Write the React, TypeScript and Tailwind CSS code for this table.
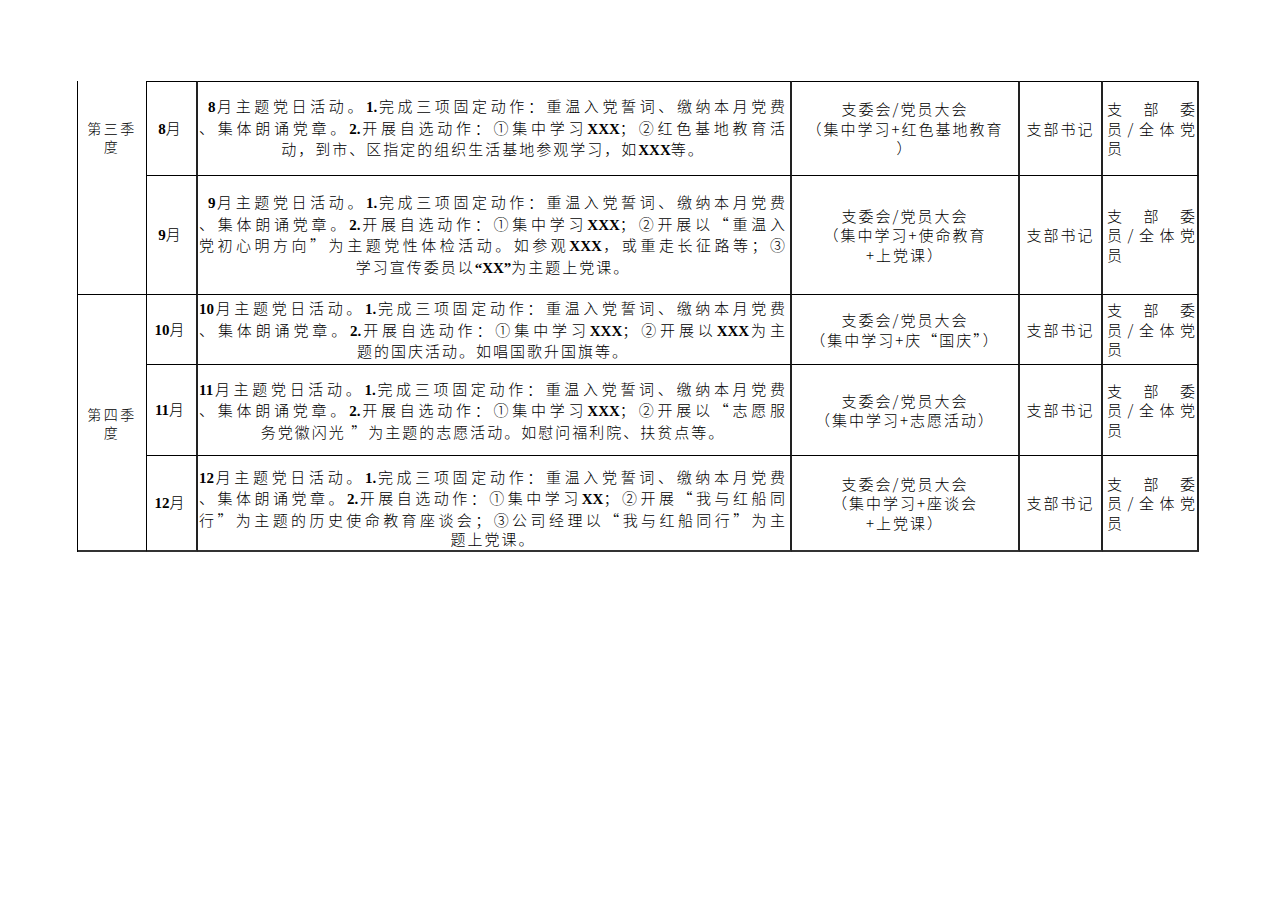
import React from "react";

const B = ({ children }: { children: React.ReactNode }) => (
  <span className="font-bold [font-family:'Liberation_Serif','Times_New_Roman',serif] tracking-normal">{children}</span>
);

const J = ({ children, pl }: { children: React.ReactNode; pl?: boolean }) => (
  <div className={"text-justify [text-align-last:justify] whitespace-nowrap " + (pl ? "pl-[9px]" : "")}>{children}</div>
);
const C = ({ children }: { children: React.ReactNode }) => (
  <div className="text-center whitespace-nowrap">{children}</div>
);

const cellBase = "flex flex-col justify-center border-b border-black";
const vr2 = "border-r-2 border-r-[#222]";

type Row = {
  month: React.ReactNode;
  content: React.ReactNode;
  contentPad: string;
  meeting: React.ReactNode;
};

const rows: Row[] = [
  {
    month: (
      <>
        <B>8</B>月
      </>
    ),
    contentPad: "",
    content: (
      <>
        <J pl>
          <B>8</B>月主题党日活动。<B>1.</B>完成三项固定动作：重温入党誓词、缴纳本月党费
        </J>
        <J>
          、集体朗诵党章。<B>2.</B>开展自选动作：①集中学习<B>XXX</B>；②红色基地教育活
        </J>
        <C>
          动，到市、区指定的组织生活基地参观学习，如<B>XXX</B>等。
        </C>
      </>
    ),
    meeting: (
      <>
        <C>支委会/党员大会</C>
        <C>（集中学习+红色基地教育</C>
        <C>）</C>
      </>
    ),
  },
  {
    month: (
      <>
        <B>9</B>月
      </>
    ),
    contentPad: "",
    content: (
      <>
        <J pl>
          <B>9</B>月主题党日活动。<B>1.</B>完成三项固定动作：重温入党誓词、缴纳本月党费
        </J>
        <J>
          、集体朗诵党章。<B>2.</B>开展自选动作：①集中学习<B>XXX</B>；②开展以“重温入
        </J>
        <J>
          党初心明方向”为主题党性体检活动。如参观<B>XXX</B>，或重走长征路等；③
        </J>
        <C>
          学习宣传委员以<B>“XX”</B>为主题上党课。
        </C>
      </>
    ),
    meeting: (
      <>
        <C>支委会/党员大会</C>
        <C>（集中学习+使命教育</C>
        <C>+上党课）</C>
      </>
    ),
  },
  {
    month: (
      <>
        <B>10</B>月
      </>
    ),
    contentPad: "",
    content: (
      <>
        <J>
          <B>10</B>月主题党日活动。<B>1.</B>完成三项固定动作：重温入党誓词、缴纳本月党费
        </J>
        <J>
          、集体朗诵党章。<B>2.</B>开展自选动作：①集中学习<B>XXX</B>；②开展以<B>XXX</B>为主
        </J>
        <C>题的国庆活动。如唱国歌升国旗等。</C>
      </>
    ),
    meeting: (
      <>
        <C>支委会/党员大会</C>
        <C>（集中学习+庆“国庆”）</C>
      </>
    ),
  },
  {
    month: (
      <>
        <B>11</B>月
      </>
    ),
    contentPad: "",
    content: (
      <>
        <J>
          <B>11</B>月主题党日活动。<B>1.</B>完成三项固定动作：重温入党誓词、缴纳本月党费
        </J>
        <J>
          、集体朗诵党章。<B>2.</B>开展自选动作：①集中学习<B>XXX</B>；②开展以“志愿服
        </J>
        <C>务党徽闪光 ”为主题的志愿活动。如慰问福利院、扶贫点等。</C>
      </>
    ),
    meeting: (
      <>
        <C>支委会/党员大会</C>
        <C>（集中学习+志愿活动）</C>
      </>
    ),
  },
  {
    month: (
      <>
        <B>12</B>月
      </>
    ),
    contentPad: "pt-[9px]",
    content: (
      <>
        <J>
          <B>12</B>月主题党日活动。<B>1.</B>完成三项固定动作：重温入党誓词、缴纳本月党费
        </J>
        <J>
          、集体朗诵党章。<B>2.</B>开展自选动作：①集中学习<B>XX</B>；②开展“我与红船同
        </J>
        <J>行”为主题的历史使命教育座谈会；③公司经理以“我与红船同行”为主</J>
        <C>题上党课。</C>
      </>
    ),
    meeting: (
      <>
        <C>支委会/党员大会</C>
        <C>（集中学习+座谈会</C>
        <C>+上党课）</C>
      </>
    ),
  },
];

export default function App() {
  return (
    <div className="min-h-[909px] w-[1286px] bg-white pt-[81px] pl-[77px] text-black text-[15px] leading-[19.5px] tracking-[2px] [font-family:'Noto_Sans_CJK_SC',sans-serif] font-light">
      <div className="grid w-[1122px] grid-cols-[69px_51px_594px_228px_83px_96px] grid-rows-[95px_119px_70px_91px_96px] border-l border-black">
        {/* Q3 label */}
        <div className="row-span-2 col-start-1 row-start-1 flex flex-col items-center border-b border-r border-black pt-[38px] text-[14px] leading-[18px] tracking-[2.5px]">
          <div>第三季</div>
          <div>度</div>
        </div>
        {/* Q4 label */}
        <div className="row-span-3 col-start-1 row-start-3 flex flex-col items-center justify-center border-b-2 border-b-[#333] border-r border-black text-[14px] leading-[18px] tracking-[2.5px]">
          <div>第四季</div>
          <div>度</div>
        </div>
        {rows.map((r, i) => {
          const top = i === 0 ? " border-t border-t-black" : "";
          const bottom = i === rows.length - 1 ? " border-b-2 border-b-[#333]" : "";
          return (
            <React.Fragment key={i}>
              <div className={`${cellBase} ${vr2} col-start-2 items-center pr-[2px] tracking-[1px]${top}${bottom}`}>
                <div className="whitespace-nowrap">{r.month}</div>
              </div>
              <div className={`${cellBase} ${vr2} col-start-3 pl-[1px] pr-[3px] ${r.contentPad}${top}${bottom}`}>{r.content}</div>
              <div className={`${cellBase} ${vr2} col-start-4${top}${bottom}`}>{r.meeting}</div>
              <div className={`${cellBase} ${vr2} col-start-5 items-center${top}${bottom}`}>
                <div className="whitespace-nowrap">支部书记</div>
              </div>
              <div className={`${cellBase} ${vr2} col-start-6 pl-[4px] pr-[1px]${top}${bottom}`}>
                <J>支部委</J>
                <J>员/全体党</J>
                <div className="text-left">员</div>
              </div>
            </React.Fragment>
          );
        })}
      </div>
    </div>
  );
}
